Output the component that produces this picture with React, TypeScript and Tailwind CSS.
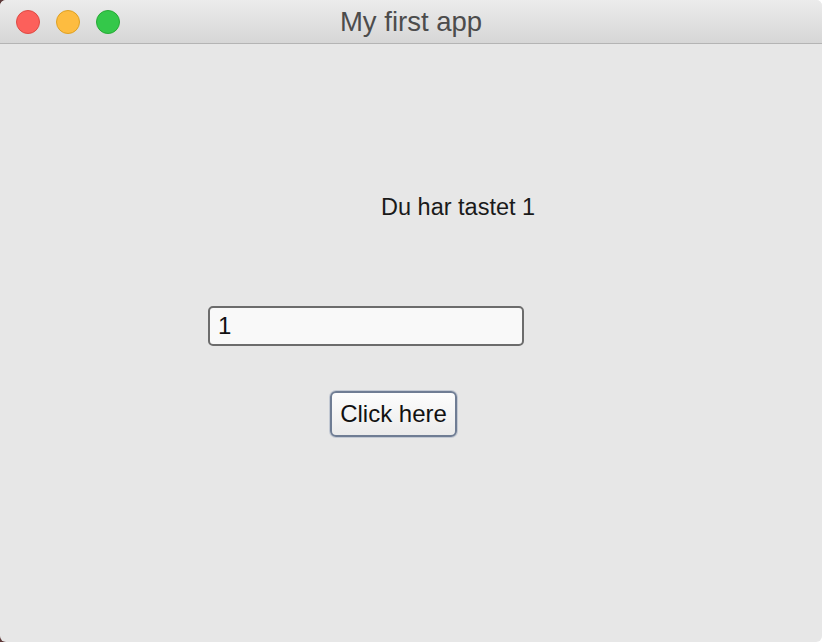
import React, { useState } from "react";

const font = { fontFamily: '"Liberation Sans", Arial, sans-serif' };

function TrafficLight({ fill, ring }: { fill: string; ring: string }) {
  return <span className={`h-[24px] w-[24px] rounded-full border ${fill} ${ring}`} />;
}

export default function App() {
  const [value, setValue] = useState("1");
  const [shown, setShown] = useState("1");

  return (
    <div
      className="h-[642px] w-[822px] bg-[linear-gradient(to_right,#5e3a3a,#ffffff)]"
      style={font}
    >
      <div className="flex h-full flex-col overflow-hidden rounded-[6px] bg-[#e7e7e7]">
        {/* title bar */}
        <div className="relative flex h-[44px] shrink-0 items-center border-b border-[#b4b4b4] bg-[linear-gradient(to_bottom,#ececec,#d6d6d6)]">
          <div className="flex gap-[16px] pl-[16px]">
            <TrafficLight fill="bg-[#fc605b]" ring="border-[#de4a43]" />
            <TrafficLight fill="bg-[#fdbc40]" ring="border-[#dea123]" />
            <TrafficLight fill="bg-[#34c84a]" ring="border-[#27aa35]" />
          </div>
          <div className="absolute inset-0 flex items-center justify-center text-[27.5px] leading-[43px] text-[#4c4c4c]">
            My first app
          </div>
        </div>

        {/* content */}
        <div className="flex flex-col">
          <div className="ml-[381px] mt-[149px] text-[23.5px] leading-[28px] text-[#1a1a1a]">
            Du har tastet {shown}
          </div>
          <input
            value={value}
            onChange={(e) => setValue(e.target.value)}
            className="ml-[208px] mt-[85px] h-[40px] w-[316px] rounded-[5px] border-2 border-[#6c6c6c] bg-[#f9f9f9] pl-[8px] text-[24px] text-[#111] outline-none"
            style={font}
          />
          <button
            type="button"
            onClick={() => setShown(value)}
            className="ml-[330px] mt-[45px] flex h-[46px] w-[127px] items-center justify-center rounded-[6px] border-2 border-[#6f7d94] bg-[linear-gradient(to_bottom,#fdfdfd,#ebebeb)] text-[24px] text-[#111] shadow-[0_0_0_1px_#c3c9d3]"
            style={font}
          >
            Click here
          </button>
        </div>
      </div>
    </div>
  );
}
